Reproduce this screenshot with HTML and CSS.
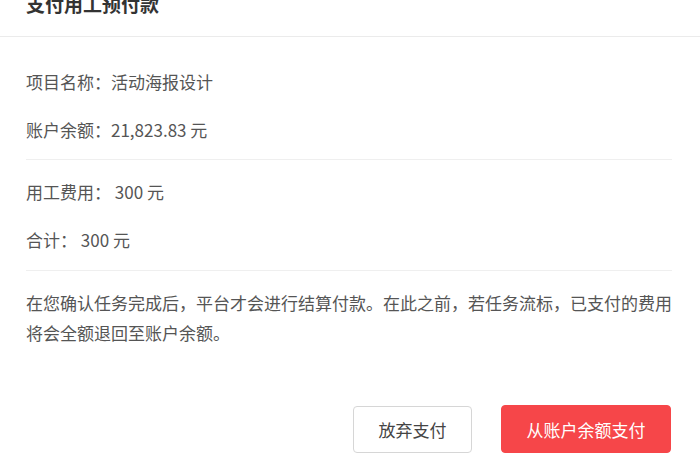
FILE: index.html
```html
<!DOCTYPE html>
<html lang="zh-CN">
<head>
<meta charset="utf-8">
<title>支付用工预付款</title>
<link rel="stylesheet" href="styles.css">
</head>
<body>
<div class="dialog">
  <div class="dialog-header">
    <h2 class="dialog-title">支付用工预付款</h2>
  </div>
  <div class="dialog-body">
    <div class="section section-info">
      <div class="row">项目名称：活动海报设计</div>
      <div class="row">账户余额：21,823.83 元</div>
    </div>
    <div class="section section-fee">
      <div class="row">用工费用： 300 元</div>
      <div class="row">合计： 300 元</div>
    </div>
    <p class="notice">在您确认任务完成后，平台才会进行结算付款。在此之前，若任务流标，已支付的费用将会全额退回至账户余额。</p>
  </div>
  <div class="dialog-footer">
    <button class="btn btn-cancel" type="button">放弃支付</button>
    <button class="btn btn-primary" type="button">从账户余额支付</button>
  </div>
</div>
</body>
</html>
```

FILE: styles.css
```css
html, body {
  margin: 0;
  padding: 0;
  background: #ffffff;
}

body {
  font-family: "Noto Sans CJK SC", "Noto Sans", sans-serif;
  color: #555555;
  font-size: 17px;
  overflow: hidden;
}

.dialog {
  width: 700px;
}

.dialog-header {
  margin-top: -9px;
  padding: 0 26px 19px;
  border-bottom: 1px solid #ebebeb;
}

.dialog-title {
  margin: 0;
  font-size: 19px;
  line-height: 26px;
  font-weight: 700;
  color: #333333;
}

.dialog-body {
  padding: 0 28px 0 26px;
}

.section {
  border-bottom: 1px solid #efefef;
}

.section-info {
  padding: 21px 0 5px;
}

.section-fee {
  padding: 8px 0 6px;
}

.row {
  height: 48px;
  line-height: 48px;
  white-space: nowrap;
}

.notice {
  margin: 0;
  padding-top: 17px;
  line-height: 30px;
  color: #555555;
}

.dialog-footer {
  display: flex;
  justify-content: flex-end;
  gap: 29px;
  padding: 57px 29px 0 0;
}

.btn {
  font-family: "Noto Sans CJK SC", "Noto Sans", sans-serif;
  font-size: 17px;
  border-radius: 4px;
  cursor: pointer;
  padding: 0;
}

.btn-cancel {
  width: 119px;
  height: 47px;
  margin-top: 1px;
  background: #ffffff;
  border: 1px solid #d6d6d6;
  color: #444444;
}

.btn-primary {
  width: 170px;
  height: 48px;
  background: #f64649;
  border: 1px solid #f64649;
  color: #ffffff;
}
```
